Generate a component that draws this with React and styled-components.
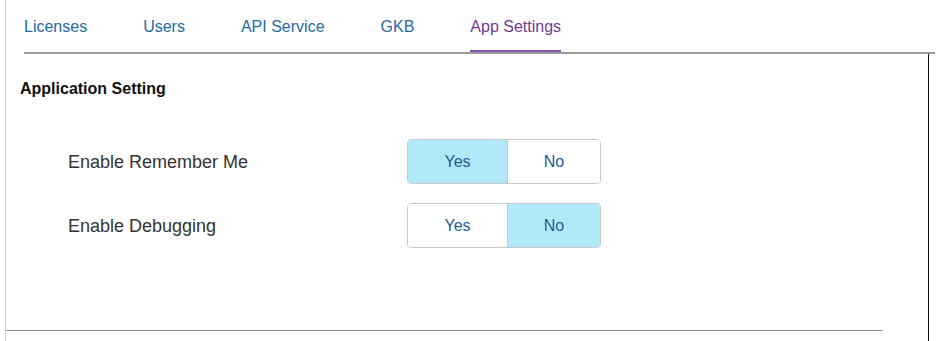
import React, { useState } from "react";
import styled, { createGlobalStyle } from "styled-components";

const Global = createGlobalStyle`
  html, body { margin: 0; padding: 0; background: #fff; }
  body { font-family: "Liberation Sans", Arial, sans-serif; }
  * { box-sizing: border-box; }
`;

const Frame = styled.div`
  margin-left: 5px;
  width: 930px;
  height: 341px;
  border-left: 1px solid #cfcfcf;
  display: flex;
  flex-direction: column;
  overflow: hidden;
`;

const TabList = styled.ul`
  list-style: none;
  margin: 0 0 0 18px;
  padding: 0;
  display: flex;
  border-bottom: 2px solid #9a9a9a;
`;

const TabItem = styled.li`
  margin-right: 56px;
  border-bottom: 2px solid ${(p) => (p.$active ? "#8a52b3" : "transparent")};
`;

const TabLink = styled.a`
  display: block;
  padding: 17px 0 13px;
  font-size: 16px;
  line-height: 20px;
  color: ${(p) => (p.$active ? "#6f3a95" : "#1f6aa5")};
  text-decoration: none;
  cursor: pointer;
`;

const Panel = styled.section`
  flex: 1;
  width: 923px;
  border-right: 1px solid #111;
  display: flex;
  flex-direction: column;
`;

const Heading = styled.h3`
  margin: 25px 0 0 14px;
  font-size: 16px;
  line-height: 20px;
  font-weight: bold;
  color: #111;
`;

const Rows = styled.div`
  margin-top: 40px;
  padding-left: 62px;
  display: flex;
  flex-direction: column;
  gap: 19px;
`;

const Row = styled.div`
  display: grid;
  grid-template-columns: 339px 194px;
  align-items: center;
`;

const Label = styled.span`
  font-size: 18px;
  line-height: 22px;
  padding-top: 1px;
  color: #333;
`;

const Group = styled.div`
  display: flex;
  height: 45px;
  border: 1px solid #c9c9c9;
  border-radius: 4px;
  overflow: hidden;
`;

const Option = styled.button`
  flex: ${(p) => (p.$first ? "0 0 99px" : "1")};
  border: none;
  border-left: ${(p) => (p.$first ? "none" : "1px solid #c9c9c9")};
  background: ${(p) => (p.$on ? "#b2e9f8" : "#fff")};
  color: #1b5d99;
  font-family: "Liberation Sans", Arial, sans-serif;
  font-size: 16px;
  padding: 0;
  cursor: pointer;
`;

const Divider = styled.hr`
  margin: auto 45px 10px 0;
  border: none;
  border-top: 1px solid #8f8f8f;
  height: 0;
`;

function Toggle({ value, onChange }) {
  return (
    <Group>
      <Option $first $on={value} onClick={() => onChange(true)}>Yes</Option>
      <Option $on={!value} onClick={() => onChange(false)}>No</Option>
    </Group>
  );
}

export default function App() {
  const [remember, setRemember] = useState(true);
  const [debug, setDebug] = useState(false);
  const tabs = ["Licenses", "Users", "API Service", "GKB", "App Settings"];
  return (
    <>
      <Global />
      <Frame>
        <TabList>
          {tabs.map((t) => (
            <TabItem key={t} $active={t === "App Settings"}>
              <TabLink $active={t === "App Settings"}>{t}</TabLink>
            </TabItem>
          ))}
        </TabList>
        <Panel>
          <Heading>Application Setting</Heading>
          <Rows>
            <Row>
              <Label>Enable Remember Me</Label>
              <Toggle value={remember} onChange={setRemember} />
            </Row>
            <Row>
              <Label>Enable Debugging</Label>
              <Toggle value={debug} onChange={setDebug} />
            </Row>
          </Rows>
          <Divider />
        </Panel>
      </Frame>
    </>
  );
}
